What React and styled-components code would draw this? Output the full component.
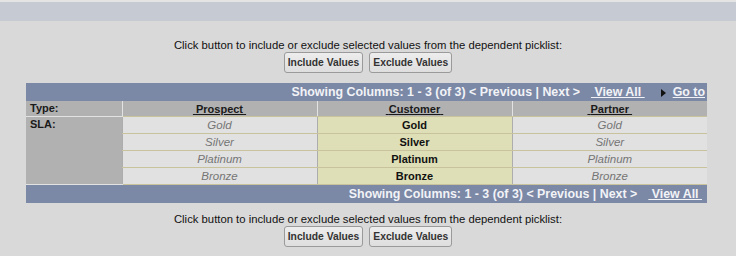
import React from "react";
import styled, { createGlobalStyle } from "styled-components";

const columns = ["Prospect", "Customer", "Partner"];
const values = ["Gold", "Silver", "Platinum", "Bronze"];
const selectedColumn = "Customer";

const GlobalStyle = createGlobalStyle`
  html, body {
    margin: 0;
    padding: 0;
    background: #d9d9d9;
    font-family: "Liberation Sans", Arial, sans-serif;
  }
`;

const Page = styled.div`
  width: 736px;
  height: 256px;
  overflow: hidden;
  background: #d9d9d9;
`;

const TopBand = styled.div`
  height: 19px;
  border-top: 2px solid #e4e4e4;
  background: #c6cad3;
`;

const Picklist = styled.div`
  display: flex;
  flex-direction: column;
  align-items: center;
  padding-top: ${(p) => p.$top}px;
`;

const Hint = styled.div`
  font-size: 11.3px;
  line-height: 13px;
  color: #111;
`;

const ButtonRow = styled.div`
  display: flex;
  gap: 6px;
`;

const Button = styled.button`
  font-family: "Liberation Sans", Arial, sans-serif;
  font-size: 10.3px;
  font-weight: bold;
  color: #333;
  height: 21px;
  padding: 0 3px;
  background: linear-gradient(#ededed, #dedede);
  border: 1px solid #9a9a9a;
  border-radius: 3px;
`;

const Grid = styled.table`
  width: 681px;
  margin: 10px 0 0 26px;
  border-collapse: collapse;
  table-layout: fixed;
  font-size: 11px;
`;

const NavCell = styled.td`
  height: 18px;
  padding: 0 ${(p) => p.$padRight}px 0 0;
  background: #7b88a6;
  color: #f2f3f7;
  font-size: 12.4px;
  font-weight: bold;
  text-align: right;
  white-space: nowrap;
`;

const NavLink = styled.a`
  color: #f2f3f7;
  text-decoration: underline;
  margin-left: ${(p) => (p.$first ? 11 : 0)}px;
`;

const Arrow = styled.span`
  display: inline-block;
  width: 0;
  height: 0;
  margin: 0 7px 0 16px;
  border-top: 4px solid transparent;
  border-bottom: 4px solid transparent;
  border-left: 5px solid #111;
  vertical-align: -1px;
`;

const LabelCell = styled.td`
  height: ${(p) => p.$h || 15}px;
  padding: 0 0 0 4px;
  background: #b1b1b1;
  border-bottom: 1px solid #e2e2e2;
  font-weight: bold;
  color: #1a1a1a;
  vertical-align: top;
  line-height: 14px;
`;

const HeadCell = styled.td`
  height: 15px;
  padding: 0;
  background: #b1b1b1;
  border-left: 1px solid #e2e2e2;
  border-bottom: 1px solid #c9c39d;
  text-align: center;
  font-weight: bold;
  color: #1a1a1a;
`;

const HeadLink = styled.span`
  text-decoration: underline;
  white-space: pre;
`;

const ValueCell = styled.td`
  height: 16px;
  padding: 0;
  text-align: center;
  border-left: 1px solid #adadad;
  border-bottom: 1px solid #c9c39d;
  background: ${(p) => (p.$selected ? "#dedfb6" : "#e1e1e1")};
  color: ${(p) => (p.$selected ? "#111" : "#757575")};
  font-size: ${(p) => (p.$selected ? 11 : 11.5)}px;
  font-style: ${(p) => (p.$selected ? "normal" : "italic")};
  font-weight: ${(p) => (p.$selected ? "bold" : "normal")};
`;

const Nav = ({ goTo }) => (
  <tr>
    <NavCell colSpan={4} $padRight={goTo ? 2 : 5}>
      Showing Columns: 1 - 3 (of 3) &lt; Previous | Next &gt;
      <NavLink $first>&nbsp;View All&nbsp;</NavLink>
      {goTo && (
        <>
          <Arrow />
          <NavLink>Go to</NavLink>
        </>
      )}
    </NavCell>
  </tr>
);

const PicklistControls = ({ top }) => (
  <Picklist $top={top}>
    <Hint>Click button to include or exclude selected values from the dependent picklist:</Hint>
    <ButtonRow>
      <Button>Include Values</Button>
      <Button>Exclude Values</Button>
    </ButtonRow>
  </Picklist>
);

export default function App() {
  return (
    <Page>
      <GlobalStyle />
      <TopBand />
      <PicklistControls top={18} />
      <Grid>
        <colgroup>
          <col style={{ width: 96 }} />
          <col style={{ width: 195 }} />
          <col style={{ width: 195 }} />
          <col style={{ width: 195 }} />
        </colgroup>
        <tbody>
          <Nav goTo />
          <tr>
            <LabelCell>Type:</LabelCell>
            {columns.map((c) => (
              <HeadCell key={c}>
                <HeadLink> {c} </HeadLink>
              </HeadCell>
            ))}
          </tr>
          {values.map((v, i) => (
            <tr key={v}>
              {i === 0 && (
                <LabelCell rowSpan={values.length} $h={67}>
                  SLA:
                </LabelCell>
              )}
              {columns.map((c) => (
                <ValueCell key={c} $selected={c === selectedColumn}>
                  {v}
                </ValueCell>
              ))}
            </tr>
          ))}
          <Nav />
        </tbody>
      </Grid>
      <PicklistControls top={10} />
    </Page>
  );
}
